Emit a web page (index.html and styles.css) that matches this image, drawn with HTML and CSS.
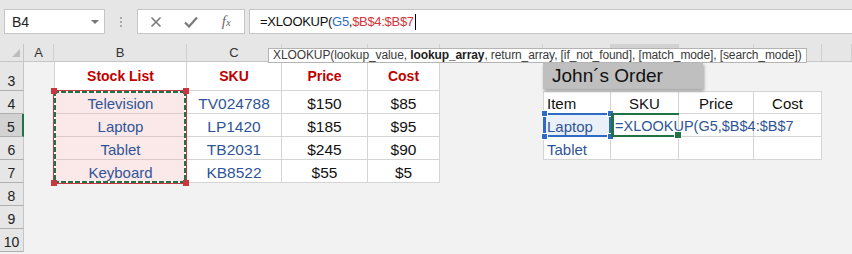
FILE: index.html
```html
<!DOCTYPE html>
<html>
<head>
<meta charset="utf-8">
<link rel="stylesheet" href="styles.css">
</head>
<body>
<div class="app">
  <div class="topbar">
    <div class="namebox"><span>B4</span><span class="dd"></span></div>
    <div class="grip"><i></i><i></i><i></i></div>
    <div class="fxbox">
      <span class="slot"><svg width="12" height="12" viewBox="0 0 12 12"><path d="M1.5 1.5 L10.5 10.5 M10.5 1.5 L1.5 10.5" stroke="#7a7a7a" stroke-width="1.6" fill="none"/></svg></span>
      <span class="slot"><svg width="14" height="12" viewBox="0 0 14 12"><path d="M1 6.5 L5 10.5 L13 1.5" stroke="#7a7a7a" stroke-width="2.2" fill="none"/></svg></span>
      <span class="slot fx">f<sub>x</sub></span>
    </div>
    <div class="formula"><span>=XLOOKUP(</span><span class="r-blue">G5</span><span>,</span><span class="r-red">$B$4:$B$7</span><span class="caret"></span></div>
  </div>

  <div class="stack">
  <div class="sheet">
    <!-- column headers (D to J are hidden under the tooltip) -->
    <div class="corner"><span class="tri"></span></div>
    <div class="ch">A</div>
    <div class="ch">B</div>
    <div class="ch">C</div>
    <div class="ch"></div>
    <div class="ch"></div>
    <div class="ch"></div>
    <div class="ch"></div>
    <div class="ch sel"></div>
    <div class="ch"></div>
    <div class="ch"></div>
    <div class="ch"></div>

    <!-- row 3 -->
    <div class="rh">3</div>
    <div class="c"></div>
    <div class="c t th first">Stock List</div>
    <div class="c t th">SKU</div>
    <div class="c t th">Price</div>
    <div class="c t th">Cost</div>
    <div class="c span6"></div>

    <!-- row 4 -->
    <div class="rh">4</div>
    <div class="c"></div>
    <div class="c t pk first blue">Television</div>
    <div class="c t blue num">TV024788</div>
    <div class="c t num">$150</div>
    <div class="c t num">$85</div>
    <div class="c"></div>
    <div class="c o first left top">Item</div>
    <div class="c o top">SKU</div>
    <div class="c o top">Price</div>
    <div class="c o top">Cost</div>
    <div class="c"></div>

    <!-- row 5 -->
    <div class="rh sel">5</div>
    <div class="c"></div>
    <div class="c t pk first blue">Laptop</div>
    <div class="c t blue num">LP1420</div>
    <div class="c t num">$185</div>
    <div class="c t num">$95</div>
    <div class="c"></div>
    <div class="c o first left blue refcell">Laptop</div>
    <div class="c o"></div>
    <div class="c o"></div>
    <div class="c o"></div>
    <div class="c"></div>

    <!-- row 6 -->
    <div class="rh">6</div>
    <div class="c"></div>
    <div class="c t pk first blue">Tablet</div>
    <div class="c t blue num">TB2031</div>
    <div class="c t num">$245</div>
    <div class="c t num">$90</div>
    <div class="c"></div>
    <div class="c o first left blue">Tablet</div>
    <div class="c o"></div>
    <div class="c o"></div>
    <div class="c o"></div>
    <div class="c"></div>

    <!-- row 7 -->
    <div class="rh">7</div>
    <div class="c"></div>
    <div class="c t pk first blue">Keyboard</div>
    <div class="c t blue num">KB8522</div>
    <div class="c t num">$55</div>
    <div class="c t num">$5</div>
    <div class="c span6"></div>

    <div class="rh">8</div><div class="c span11"></div>
    <div class="rh">9</div><div class="c span11"></div>
    <div class="rh">10</div><div class="c span11"></div>
  </div>

  <div class="sheet overlay">
    <div class="johns">John´s Order</div>
    <div class="ants">
      <span class="h tl red"></span><span class="h tr red"></span><span class="h bl red"></span><span class="h br red"></span>
    </div>
    <div class="bluesel">
      <span class="h tl blu"></span><span class="h tr blu"></span><span class="h bl blu"></span><span class="h br blu"></span>
    </div>
    <div class="active"><span class="edit">=XLOOKUP(G5,$B$4:$B$7</span><span class="gh"></span></div>
  </div>
  </div>

  <div class="tooltip">XLOOKUP(lookup_value, <b>lookup_array</b>, return_array, [if_not_found], [match_mode], [search_mode])</div>
</div>
</body>
</html>
```

FILE: styles.css
```css
html, body {
  margin: 0;
  padding: 0;
}
body {
  width: 852px;
  height: 254px;
  overflow: hidden;
  background: #f2f2f2;
  font-family: "Liberation Sans", Arial, sans-serif;
}
.app {
  position: relative;
  width: 852px;
  height: 254px;
  overflow: hidden;
}

/* ---------- formula bar ---------- */
.topbar {
  height: 44px;
  box-sizing: border-box;
  padding-top: 9px;
  background: #e6e6e6;
  display: flex;
  align-items: flex-start;
}
.namebox {
  margin-left: 4px;
  width: 101px;
  height: 25px;
  box-sizing: border-box;
  background: #fff;
  border: 1px solid #c6c6c6;
  display: flex;
  align-items: center;
  justify-content: space-between;
  padding: 0 5px 0 7px;
  font-size: 14px;
  color: #222;
}
.dd {
  width: 0;
  height: 0;
  border-left: 4px solid transparent;
  border-right: 4px solid transparent;
  border-top: 4px solid #777;
  margin-top: 1px;
}
.grip {
  width: 32px;
  height: 25px;
  display: flex;
  flex-direction: column;
  align-items: center;
  justify-content: center;
  gap: 2px;
}
.grip i {
  display: block;
  width: 2px;
  height: 2px;
  background: #aaa;
}
.fxbox {
  width: 108px;
  height: 25px;
  box-sizing: border-box;
  background: #fff;
  border: 1px solid #c6c6c6;
  display: flex;
  align-items: center;
}
.slot {
  width: 36px;
  height: 23px;
  display: flex;
  align-items: center;
  justify-content: center;
}
.fx {
  font-family: "Liberation Serif", serif;
  font-style: italic;
  font-size: 15px;
  color: #6a6a6a;
}
.fx sub {
  font-size: 11px;
  vertical-align: -1px;
}
.formula {
  margin-left: 4px;
  flex: 1;
  height: 25px;
  box-sizing: border-box;
  background: #fff;
  border: 1px solid #c6c6c6;
  border-right: none;
  padding-left: 10px;
  display: flex;
  align-items: center;
  font-size: 13px;
  letter-spacing: -0.3px;
  color: #111;
  white-space: pre;
}
.r-blue { color: #2e6ec4; }
.r-red { color: #d0363c; }
.caret {
  display: inline-block;
  width: 1px;
  height: 16px;
  background: #000;
  margin-left: 1px;
}

/* ---------- sheet grid ---------- */
.stack {
  display: grid;
}
.stack > .sheet {
  grid-area: 1 / 1;
}
.sheet {
  display: grid;
  grid-template-columns: 24px 30px 133px 95px 86px 72px 103px 68px 68px 75px 68px 1fr;
  grid-template-rows: 18px 29px repeat(8, 23px);
}
.overlay {
  pointer-events: none;
}
.corner {
  background: #e6e6e6;
  border-right: 1px solid #c6c6c6;
  border-bottom: 1px solid #c6c6c6;
  position: relative;
}
.tri {
  position: absolute;
  right: 3px;
  bottom: 4px;
  width: 0;
  height: 0;
  border-left: 8px solid transparent;
  border-bottom: 8px solid #bdbdbd;
}
.ch {
  background: #e6e6e6;
  border-right: 1px solid #cfcfcf;
  border-bottom: 1px solid #c6c6c6;
  display: flex;
  align-items: flex-end;
  justify-content: center;
  font-size: 13px;
  line-height: 16px;
  color: #333;
}
.ch.sel {
  background: #d2d2d2;
  border-bottom: 2px solid #217346;
  color: #1d1d1d;
}
.rh {
  background: #e6e6e6;
  border-right: 1px solid #c6c6c6;
  border-bottom: 1px solid #b0b0b0;
  display: flex;
  align-items: flex-end;
  justify-content: center;
  font-size: 14px;
  line-height: 17px;
  color: #222;
}
.rh.sel {
  background: #d2d2d2;
  border-right: 2px solid #217346;
}
.c {
  min-width: 0;
  display: flex;
  align-items: flex-end;
  justify-content: center;
  font-size: 15px;
  line-height: 19px;
  color: #111;
  white-space: nowrap;
}
.span6 { grid-column: span 6; }
.span11 { grid-column: span 11; }

/* stock list table */
.t {
  background: #fff;
  border-right: 1px solid #d4d4d4;
  border-bottom: 1px solid #d4d4d4;
}
.t.first { border-left: 1px solid #d4d4d4; }
.th {
  align-items: center;
  font-weight: bold;
  font-size: 14px;
  color: #c00000;
}
.pk {
  background: #fbe9e9;
  border-bottom-color: #dcc9c9;
}
.num { font-size: 15.5px; }
.blue { color: #2f5597; }

/* order table */
.o {
  background: #fff;
  border-right: 1px solid #d4d4d4;
  border-bottom: 1px solid #d4d4d4;
}
.o.first { border-left: 1px solid #d4d4d4; }
.o.top { border-top: 1px solid #d4d4d4; }
.o.refcell { background: #e9f0fa; }
.left {
  justify-content: flex-start;
  padding-left: 3px;
}

/* overlays */
.johns {
  grid-column: 8 / span 3;
  grid-row: 2;
  align-self: start;
  margin-top: 1px;
  width: 160px;
  height: 26px;
  box-sizing: border-box;
  background: #bfbfbf;
  box-shadow: 1px 2px 3px rgba(0, 0, 0, 0.35);
  padding-left: 9px;
  font-size: 19px;
  line-height: 25px;
  color: #111;
}
.ants {
  grid-column: 3;
  grid-row: 3 / span 4;
  position: relative;
  border: 1px solid #c8373f;
  margin: -1px 0 -1px -1px;
  background:
    repeating-linear-gradient(90deg, #217346 0 5px, #fff 5px 7px) top left / 100% 2px no-repeat,
    repeating-linear-gradient(90deg, #217346 0 5px, #fff 5px 7px) bottom left / 100% 2px no-repeat,
    repeating-linear-gradient(180deg, #217346 0 5px, #fff 5px 7px) top left / 2px 100% no-repeat,
    repeating-linear-gradient(180deg, #217346 0 5px, #fff 5px 7px) top right / 2px 100% no-repeat;
  background-origin: padding-box;
}
.bluesel {
  grid-column: 8;
  grid-row: 4;
  position: relative;
  margin: -1px 0 0 0;
  border: 2px solid #2f6bc4;
  border-left-width: 3px;
}
.h {
  position: absolute;
  width: 6px;
  height: 6px;
}
.h.red { background: #c8373f; }
.h.blu {
  background: #2f6bc4;
  border: 1px solid #fff;
  box-sizing: border-box;
  width: 7px;
  height: 7px;
}
.ants .tl { left: -3px; top: -3px; }
.ants .tr { right: -3px; top: -3px; }
.ants .bl { left: -3px; bottom: -3px; }
.ants .br { right: -3px; bottom: -3px; }
.bluesel .tl { left: -5px; top: -5px; }
.bluesel .tr { right: -5px; top: -5px; }
.bluesel .bl { left: -5px; bottom: -5px; }
.bluesel .br { right: -5px; bottom: -5px; }
.active {
  grid-column: 9;
  grid-row: 4;
  position: relative;
  margin: -1px 0 0 0;
  border-top: 2px solid #217346;
  border-bottom: 2px solid #217346;
  border-left: 3px solid #217346;
  display: flex;
  align-items: flex-end;
}
.edit {
  padding-left: 1px;
  font-size: 14.5px;
  line-height: 18px;
  color: #2f5597;
  white-space: nowrap;
}
.gh {
  position: absolute;
  right: -3px;
  bottom: -4px;
  width: 6px;
  height: 6px;
  background: #217346;
  border: 1px solid #fff;
}

/* tooltip */
.tooltip {
  position: absolute;
  left: 268px;
  top: 48px;
  height: 15px;
  box-sizing: border-box;
  padding: 0 4px;
  background: #fff;
  border: 1px solid #b4b4b4;
  font-size: 12px;
  letter-spacing: -0.1px;
  line-height: 13px;
  color: #3a3a3a;
  white-space: nowrap;
  z-index: 10;
}
.tooltip b { color: #222; }
```
